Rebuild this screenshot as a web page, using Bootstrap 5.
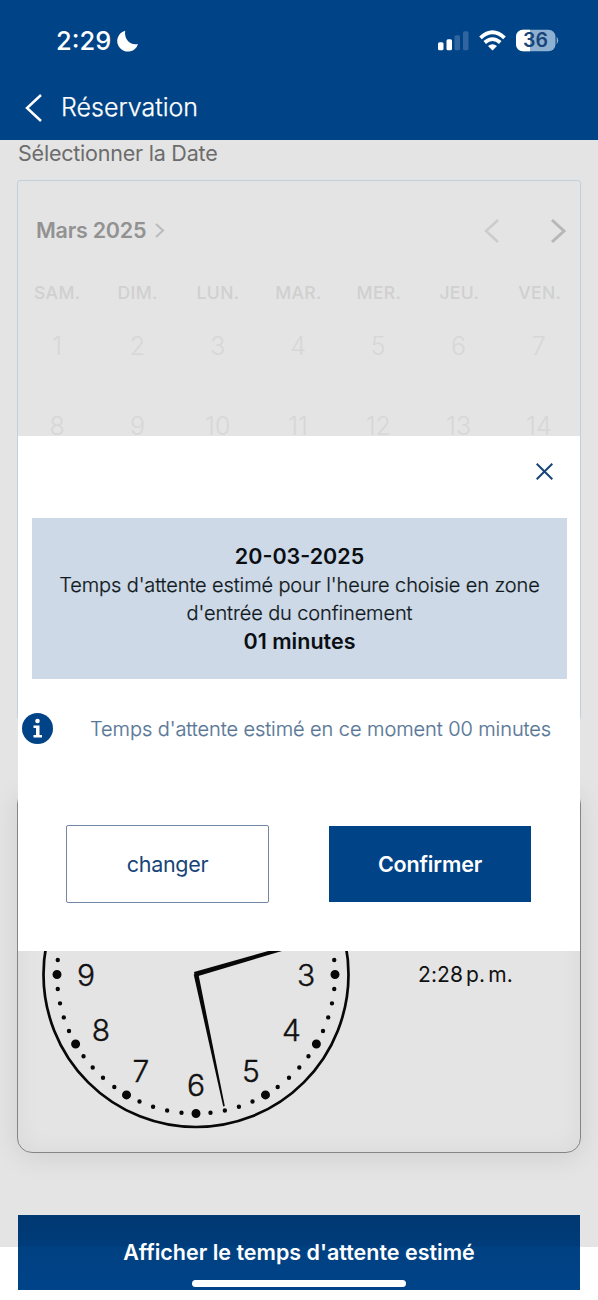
<!DOCTYPE html>
<html lang="fr">
<head>
<meta charset="utf-8">
<meta name="viewport" content="width=device-width, initial-scale=1">
<title>Réservation</title>
<link href="https://cdn.jsdelivr.net/npm/bootstrap@5.3.0/dist/css/bootstrap.min.css" rel="stylesheet">
<style>
  :root { --brand: #004386; --shade: #e4e4e4; }
  body { font-family: Inter, "Liberation Sans", sans-serif; background: #fff; color: #111; white-space: nowrap; }
  .app-screen { width: 598px; height: 1300px; }
  .app-header { height: 140px; background: var(--brand); }
  .status-row { height: 74px; padding: 7px 39px 0 56px; }
  .status-time { font-size: 25.5px; font-weight: 500; padding-top: 2px; }
  .title-row { height: 66px; padding: 1px 0 0 25px; gap: 18px; }
  .page-title { font-size: 25px; font-weight: 300; letter-spacing: 0; -webkit-text-stroke: .25px; }
  .shaded { height: 1107px; background: var(--shade); padding: 0 17px; }
  .section-label { height: 40px; line-height: 27px; font-size: 21.5px; letter-spacing: -.22px; padding-left: 1px; color: #6c6c6c; }
  .calendar-box { height: 540px; border: 1.5px solid #c0d0dc; border-radius: 3px; }
  .calendar-head { height: 99px; padding: 0 13px 0 18px; color: #929292; }
  .month-name { font-size: 21.5px; font-weight: 600; letter-spacing: -.25px; }
  .week-row { display: grid; grid-template-columns: repeat(7, 1fr); text-align: center; margin: 0 0 0 -1px; }
  .day-names { font-size: 17.5px; font-weight: 500; color: #d0d0d0; height: 26px; line-height: 26px; letter-spacing: .4px; }
  .day-cells { height: 80px; line-height: 80px; font-size: 25px; font-weight: 300; color: #d7d7d7; margin-right: 1px; }
  .clock-card { height: 364px; margin-top: 69px; border: 1.5px solid #858585; border-radius: 15px; background: var(--shade);
    box-shadow: 0 4px 28px rgba(0,0,0,.09), inset 0 0 24px rgba(0,0,0,.05); padding-left: 23px; }
  .clock-face { margin-top: 23px; }
  .clock-digits { font-size: 30px; font-weight: 300; stroke: #111; stroke-width: .4px; }
  .clock-time { margin-top: 173px; margin-left: 67px; font-size: 21px; line-height: 24px; letter-spacing: .1px; word-spacing: -3px; }
  .show-wait { height: 75px; margin: -32px 18px 0; background: linear-gradient(#003871 0, #003c7b 31px, #004182 32px, #004388); color: #fff; border-radius: 0; border: 0; }
  .show-wait-text { font-size: 21.5px; font-weight: 600; }
  .home-bar { position: absolute; left: 192px; top: 1280px; width: 214px; height: 7px; border-radius: 4px; background: #fff; }
  .confirm-box { position: absolute; left: 18px; top: 436px; width: 562px; height: 515px; background: #fff; }
  .close-row { height: 82px; padding: 0 27px 12px 0; }
  .estimate-box { height: 161px; margin: 0 13px 0 14px; background: #cdd9e6; text-align: center; padding-top: 24px; }
  .estimate-strong { font-size: 21.5px; line-height: 29px; font-weight: 600; color: #0b0e13; }
  .estimate-text { font-size: 20px; line-height: 28px; font-weight: 300; letter-spacing: -.12px; color: #101820; -webkit-text-stroke: .2px; }
  .info-row { height: 99px; padding-left: 4px; gap: 37px; color: #587797; font-size: 20px; font-weight: 300; letter-spacing: -.08px; -webkit-text-stroke: .2px; }
  .action-row { padding: 47px 49px 0 48px; }
  .action-btn { border-radius: 0; font-size: 21.5px; padding: 0; }
  .btn-change { width: 203px; height: 78px; color: #174578; border: 1.5px solid #7187a5; border-radius: 2px; letter-spacing: -.3px; }
  .btn-confirm { width: 202px; height: 76px; margin-top: 1px; color: #fff; background: var(--brand); border: 0; font-weight: 600; letter-spacing: -.15px; }
</style>
</head>
<body>
<div class="app-screen position-relative overflow-hidden">
  <header class="app-header text-white">
    <div class="status-row d-flex align-items-center">
      <span class="status-time">2:29</span>
      <svg style="margin-left:6px" width="23" height="24" viewBox="0 0 23 24"><path d="M8.300 1.700A10.600 10.600 0 1 0 21 15C14 17 6.500 10.500 8.300 1.700Z" fill="#fff"/></svg>
      <svg class="ms-auto" width="122" height="24" viewBox="0 0.700 122 24">
        <g fill="#fff"><rect x="1" y="14" width="5.500" height="8" rx="1.500"/><rect x="9.500" y="11" width="5.500" height="11" rx="1.500"/></g>
        <g fill="#3065a0"><rect x="17.500" y="7" width="5.500" height="15" rx="1.500"/><rect x="26" y="3" width="5.500" height="19" rx="1.500"/></g>
        <g fill="none" stroke="#fff" stroke-width="3.800"><path d="M43.500 9.500Q55.500-1.500 67.500 9.500"/><path d="M47.700 14.200Q55.500 7.500 63.300 14.200"/></g>
        <path d="M51 17.700Q55.500 14 60 17.700L55.500 22.300Z" fill="#fff"/>
        <path d="M86 1.500h25.500a7 7 0 0 1 7 7v7.500a7 7 0 0 1-7 7H86a7 7 0 0 1-7-7V8.500a7 7 0 0 1 7-7Z" fill="#8eb0d1"/>
        <path d="M93 1.500h-7a7 7 0 0 0-7 7v7.500a7 7 0 0 0 7 7h7Z" fill="#fff"/>
        <path d="M119.700 8.500v7.500q3-3.800 0-7.500Z" fill="#8eb0d1"/>
        <text x="98.500" y="19.200" text-anchor="middle" font-size="19.500" font-weight="600" fill="#174578">36</text>
      </svg>
    </div>
    <div class="title-row d-flex align-items-center">
      <svg width="18" height="30" viewBox="0 0 18 30"><path d="M16 2 2 15 16 28" fill="none" stroke="#fff" stroke-width="2.500"/></svg>
      <span class="page-title">Réservation</span>
    </div>
  </header>

  <main class="shaded">
    <div class="section-label">Sélectionner la Date</div>
    <section class="calendar-box">
      <div class="calendar-head d-flex align-items-center">
        <span class="month-name">Mars 2025</span>
        <svg class="ms-2" width="11" height="17" viewBox="0 0 11 17"><path d="M2 2 9 8.500 2 15" fill="none" stroke="#bcbcbc" stroke-width="2.200"/></svg>
        <svg class="ms-auto" width="84" height="26" viewBox="0 0 84 26"><path d="M15 2 3 13 15 24" fill="none" stroke="#ccc" stroke-width="2.500"/><path d="M69 2 81 13 69 24" fill="none" stroke="#b7b7b7" stroke-width="3"/></svg>
      </div>
      <div class="week-row day-names"><span>SAM.</span><span>DIM.</span><span>LUN.</span><span>MAR.</span><span>MER.</span><span>JEU.</span><span>VEN.</span></div>
      <div class="week-row day-cells"><span>1</span><span>2</span><span>3</span><span>4</span><span>5</span><span>6</span><span>7</span></div>
      <div class="week-row day-cells"><span>8</span><span>9</span><span>10</span><span>11</span><span>12</span><span>13</span><span>14</span></div>
    </section>
    <section class="clock-card d-flex align-items-start">
      <svg class="clock-face flex-shrink-0" width="310" height="322" viewBox="-155 -161.500 310 322">
        <circle r="152.500" fill="none" stroke="#080808" stroke-width="2.700"/>
        <circle r="139" fill="none" stroke="#080808" stroke-width="4.400" stroke-linecap="round" pathLength="60" stroke-dasharray="0 1"/>
        <circle r="139" fill="none" stroke="#080808" stroke-width="9" stroke-linecap="round" pathLength="12" stroke-dasharray="0 1"/>
        <g class="clock-digits" text-anchor="middle" fill="#111">
          <text x="110" y="11">3</text><text x="95.500" y="66">4</text><text x="55" y="107">5</text>
          <text x="0" y="121">6</text><text x="-55" y="107">7</text><text x="-95" y="66">8</text><text x="-110" y="11">9</text>
        </g>
        <path d="M-2-2.500 90-28.500 91-25-1 2.500Z" fill="#080808"/>
        <path d="M-2.300 0 2.300-1 28.800 131.500 27.200 132Z" fill="#080808"/>
      </svg>
      <span class="clock-time">2:28 p. m.</span>
    </section>
  </main>
  <div class="show-wait btn d-flex align-items-center justify-content-center position-relative"><span class="show-wait-text">Afficher le temps d'attente estimé</span></div>

  <div class="confirm-box">
    <div class="close-row d-flex align-items-center justify-content-end">
      <svg width="17" height="17" viewBox="0 0 17 17"><path d="M.7.700 16.300 16.300M16.300.700.700 16.300" stroke="#174578" stroke-width="2"/></svg>
    </div>
    <div class="estimate-box">
      <div class="estimate-strong">20-03-2025</div>
      <div class="estimate-text">Temps d'attente estimé pour l'heure choisie en zone<br>d'entrée du confinement</div>
      <div class="estimate-strong">01 minutes</div>
    </div>
    <div class="info-row d-flex align-items-center">
      <svg width="31" height="31" viewBox="0 0 31 31"><circle cx="15.500" cy="15.500" r="15.500" fill="#004386"/><circle cx="15.500" cy="8" r="2.300" fill="#fff"/><path d="M11.500 12.500H17.500V22H20V24.500H11.500V22H14V15H11.500Z" fill="#fff"/></svg>
      <span>Temps d'attente estimé en ce moment 00 minutes</span>
    </div>
    <div class="action-row d-flex justify-content-between">
      <button class="btn action-btn btn-change">changer</button>
      <button class="btn action-btn btn-confirm">Confirmer</button>
    </div>
  </div>
  <div class="home-bar"></div>
</div>
<script src="https://cdn.jsdelivr.net/npm/bootstrap@5.3.0/dist/js/bootstrap.bundle.min.js"></script>
</body>
</html>
